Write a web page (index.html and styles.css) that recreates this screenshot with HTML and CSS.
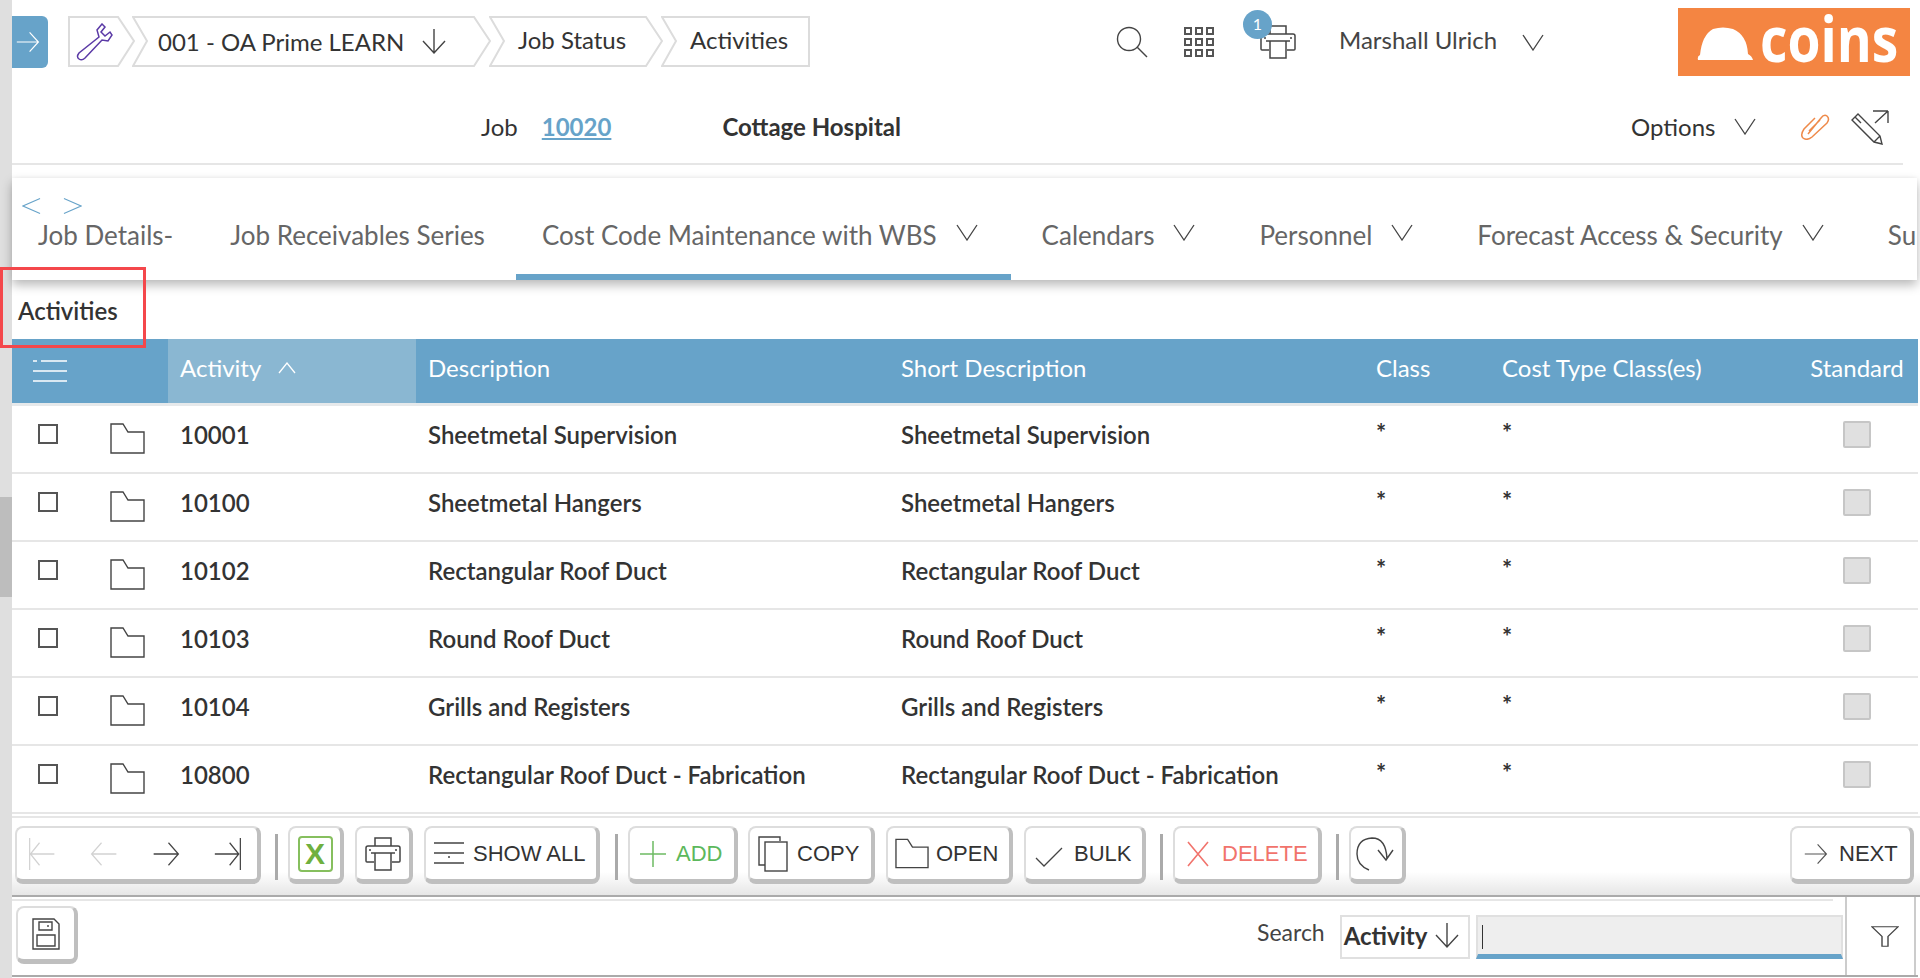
FILE: index.html
```html
<!DOCTYPE html>
<html lang="en">
<head>
  <meta charset="UTF-8">
  <title>Activities</title>
  <link rel="stylesheet" href="styles.css">
</head>
<body>
  <svg class="sprites" width="0" height="0">
    <symbol id="chev" viewBox="0 0 22 17"><path d="M1 1 L11 16 L21 1" fill="none" stroke="#444" stroke-width="1.3"/></symbol>
    <symbol id="folder" viewBox="0 0 35 31"><path d="M1 1 H13 L18 9 H34 V30 H1 Z" fill="#fff" stroke="#444" stroke-width="1.4"/></symbol>
    <symbol id="printer" viewBox="0 0 36 34"><path d="M10 9 V1 H26 V9 M9 25 H2 Q1 25 1 24 V11 Q1 9 3 9 H33 Q35 9 35 11 V24 Q35 25 34 25 H27 M6 16 H30 M10 16 V33 H26 V16 M4 13 H6 M30 13 H32" fill="none" stroke="#444" stroke-width="1.5"/></symbol>
    <symbol id="arrow" viewBox="0 0 30 26"><path d="M1 13 H28 M17 1 L28 13 L17 25" fill="none" stroke="currentColor" stroke-width="1.5"/></symbol>
  </svg>

  <div class="gutter"><div class="gutter-thumb"></div></div>

  <div class="page">
    <header class="topbar">
      <button class="nav-toggle"><svg class="ico-24 ico-white"><use href="#arrow"/></svg></button>
      <nav class="crumbs">
        <div class="crumb crumb-tool">
          <svg class="crumb-shape" viewBox="0 0 68 52"><path d="M1 1 H50 L66 25 L50 50 H1 Z"/></svg>
          <svg class="wrench" viewBox="0 0 38 38"><path d="M27 1 L22 7 L24 14 L4 30 Q1 34 4 36 Q7 38 10 35 L27 17 L33 18 L37 12 L35 9 L30 13 L26 9 L30 4 Z" fill="none" stroke="#5b3aa6" stroke-width="1.5"/></svg>
        </div>
        <div class="crumb crumb-co">
          <svg class="crumb-shape" viewBox="0 0 360 52"><path d="M1 1 H342 L358 25 L342 50 H1 L15 25 Z"/></svg>
          <span>001 - OA Prime LEARN</span>
          <svg class="down" viewBox="0 0 24 26"><path d="M12 1 V25 M1 13 L12 25 L23 13" fill="none" stroke="#444" stroke-width="1.4"/></svg>
        </div>
        <div class="crumb crumb-status">
          <svg class="crumb-shape" viewBox="0 0 175 52"><path d="M1 1 H157 L173 25 L157 50 H1 L15 25 Z"/></svg>
          <span>Job Status</span>
        </div>
        <div class="crumb crumb-act">
          <svg class="crumb-shape" viewBox="0 0 150 52"><path d="M1 1 H148 V50 H1 L15 25 Z"/></svg>
          <span>Activities</span>
        </div>
      </nav>

      <div class="top-tools">
        <svg class="search-ico" viewBox="0 0 32 32"><circle cx="13" cy="13" r="11.5" fill="none" stroke="#444" stroke-width="1.4"/><path d="M21 21 L31 31" stroke="#444" stroke-width="1.4"/></svg>
        <div class="apps">
          <i></i><i></i><i></i><i></i><i></i><i></i><i></i><i></i><i></i>
        </div>
        <div class="print-wrap">
          <svg class="print-ico"><use href="#printer"/></svg>
          <span class="badge">1</span>
        </div>
        <span class="user">Marshall Ulrich</span>
        <svg class="chev"><use href="#chev"/></svg>
      </div>

      <div class="logo">
        <svg class="helmet" viewBox="0 0 56 34"><path d="M1 33 Q0 29 3 28 Q5 8 16 2 Q26 -1 36 2 Q50 8 51 27 Q55 29 56 33 Z" fill="#fff"/></svg>
        <span>coins</span>
      </div>
    </header>

    <section class="job-row">
      <span class="job-label">Job</span>
      <a class="job-link">10020</a>
      <strong class="job-name">Cottage Hospital</strong>
      <span class="options">Options</span>
      <svg class="chev"><use href="#chev"/></svg>
      <svg class="clip" viewBox="0 0 30 27"><path d="M8 21 L21 5 Q24 1 27 3 Q30 6 27 10 L12 24 Q7 28 3 25 Q0 22 4 16 L15 5 M9 18 L20 7" fill="none" stroke="#ee8a4a" stroke-width="1.5"/></svg>
      <svg class="pencil" viewBox="0 0 38 38"><path d="M1 13 L7 7 L29 29 L31 37 L23 35 Z M4 10 L10 16 M7 7 L13 13 M23 35 L29 29 M22 4 H37 M37 4 V16 M37 4 L24 16" fill="none" stroke="#444" stroke-width="1.4"/></svg>
    </section>

    <section class="tab-panel">
      <div class="tab-arrows">
        <svg viewBox="0 0 20 18"><path d="M19 1 L1 9 L19 17" fill="none" stroke="#67a3c9" stroke-width="1.1"/></svg>
        <svg viewBox="0 0 20 18"><path d="M1 1 L19 9 L1 17" fill="none" stroke="#67a3c9" stroke-width="1.1"/></svg>
      </div>
      <div class="tabs">
        <div class="tab">Job Details-</div>
        <div class="tab">Job Receivables Series</div>
        <div class="tab tab-more tab-active">Cost Code Maintenance with WBS <svg class="chev"><use href="#chev"/></svg></div>
        <div class="tab tab-more">Calendars <svg class="chev"><use href="#chev"/></svg></div>
        <div class="tab tab-more">Personnel <svg class="chev"><use href="#chev"/></svg></div>
        <div class="tab tab-more">Forecast Access &amp; Security <svg class="chev"><use href="#chev"/></svg></div>
        <div class="tab">Su</div>
      </div>
    </section>

    <h2 class="section-title">Activities</h2>
    <div class="red-box"></div>

    <div class="grid-head">
      <div class="col-tools"><svg class="list-ico" viewBox="0 0 34 22"><path d="M0 1 H4 M8 1 H34 M0 11 H34 M0 21 H34" stroke="#fff" stroke-width="1.5"/></svg></div>
      <div class="head-sorted">Activity <svg class="up" viewBox="0 0 18 12"><path d="M1 11 L9 1 L17 11" fill="none" stroke="#fff" stroke-width="1.3"/></svg></div>
      <div class="head-cell">Description</div>
      <div class="head-cell">Short Description</div>
      <div class="head-cell head-tight">Class</div>
      <div class="head-cell head-tight">Cost Type Class(es)</div>
      <div class="head-std">Standard</div>
    </div>

    <div class="grid-body">
      <div class="grid-row">
        <div class="col-tools"><span class="check"></span><svg class="folder"><use href="#folder"/></svg></div>
        <div class="cell">10001</div><div class="cell">Sheetmetal Supervision</div><div class="cell">Sheetmetal Supervision</div>
        <div class="cell star">*</div><div class="cell star">*</div><div class="col-std"><span class="std-box"></span></div>
      </div>
      <div class="grid-row">
        <div class="col-tools"><span class="check"></span><svg class="folder"><use href="#folder"/></svg></div>
        <div class="cell">10100</div><div class="cell">Sheetmetal Hangers</div><div class="cell">Sheetmetal Hangers</div>
        <div class="cell star">*</div><div class="cell star">*</div><div class="col-std"><span class="std-box"></span></div>
      </div>
      <div class="grid-row">
        <div class="col-tools"><span class="check"></span><svg class="folder"><use href="#folder"/></svg></div>
        <div class="cell">10102</div><div class="cell">Rectangular Roof Duct</div><div class="cell">Rectangular Roof Duct</div>
        <div class="cell star">*</div><div class="cell star">*</div><div class="col-std"><span class="std-box"></span></div>
      </div>
      <div class="grid-row">
        <div class="col-tools"><span class="check"></span><svg class="folder"><use href="#folder"/></svg></div>
        <div class="cell">10103</div><div class="cell">Round Roof Duct</div><div class="cell">Round Roof Duct</div>
        <div class="cell star">*</div><div class="cell star">*</div><div class="col-std"><span class="std-box"></span></div>
      </div>
      <div class="grid-row">
        <div class="col-tools"><span class="check"></span><svg class="folder"><use href="#folder"/></svg></div>
        <div class="cell">10104</div><div class="cell">Grills and Registers</div><div class="cell">Grills and Registers</div>
        <div class="cell star">*</div><div class="cell star">*</div><div class="col-std"><span class="std-box"></span></div>
      </div>
      <div class="grid-row">
        <div class="col-tools"><span class="check"></span><svg class="folder"><use href="#folder"/></svg></div>
        <div class="cell">10800</div><div class="cell">Rectangular Roof Duct - Fabrication</div><div class="cell">Rectangular Roof Duct - Fabrication</div>
        <div class="cell star">*</div><div class="cell star">*</div><div class="col-std"><span class="std-box"></span></div>
      </div>
    </div>

    <div class="toolbar">
      <div class="btn pager">
        <svg class="ico-pager off" viewBox="0 0 34 36" preserveAspectRatio="none"><path d="M2 1 V35 M3 18 H32 M14 6 L3 18 L14 30" fill="none" stroke="currentColor" stroke-width="1.5"/></svg>
        <svg class="ico-pager off" viewBox="0 0 34 36" preserveAspectRatio="none"><path d="M2 18 H32 M14 6 L2 18 L14 30" fill="none" stroke="currentColor" stroke-width="1.5"/></svg>
        <svg class="ico-pager" viewBox="0 0 34 36" preserveAspectRatio="none"><path d="M2 18 H32 M20 6 L32 18 L20 30" fill="none" stroke="currentColor" stroke-width="1.5"/></svg>
        <svg class="ico-pager" viewBox="0 0 34 36" preserveAspectRatio="none"><path d="M1 18 H30 M19 6 L30 18 L19 30 M32 1 V35" fill="none" stroke="currentColor" stroke-width="1.5"/></svg>
      </div>
      <span class="sep"></span>
      <div class="btn btn-excel"><span class="excel-x">X</span></div>
      <div class="btn btn-print"><svg class="print-ico"><use href="#printer"/></svg></div>
      <div class="btn btn-show">
        <svg class="ico-showall" viewBox="0 0 30 24"><path d="M0 1 H30 M0 11 H30 M15 14 V16 M0 21 H30" fill="none" stroke="#444" stroke-width="1.5"/></svg>
        SHOW ALL
      </div>
      <span class="sep sep-a"></span>
      <div class="btn btn-add">
        <svg class="ico-add" viewBox="0 0 26 26"><path d="M13 0 V26 M0 13 H26" stroke="#6dbb63" stroke-width="1.5"/></svg>
        ADD
      </div>
      <div class="btn btn-copy">
        <svg class="ico-copy" viewBox="0 0 30 36"><path d="M22 5 V1 H1 V29 H7" fill="none" stroke="#444" stroke-width="1.4"/><rect x="7" y="6" width="22" height="29" fill="#fff" stroke="#444" stroke-width="1.4"/></svg>
        COPY
      </div>
      <div class="btn btn-open">
        <svg class="ico-open"><use href="#folder"/></svg>
        OPEN
      </div>
      <div class="btn btn-bulk">
        <svg class="ico-bulk" viewBox="0 0 28 20"><path d="M1 11 L9 19 L27 1" fill="none" stroke="#444" stroke-width="1.3"/></svg>
        BULK
      </div>
      <span class="sep sep-b"></span>
      <div class="btn btn-delete">
        <svg class="ico-del" viewBox="0 0 22 26"><path d="M1 1 L21 25 M21 1 L1 25" stroke="#f1736c" stroke-width="1.6"/></svg>
        DELETE
      </div>
      <span class="sep sep-c"></span>
      <div class="btn btn-refresh">
        <svg class="ico-refresh" viewBox="0 0 38 34"><path d="M13 33 Q1 28 1 17 Q1 2 16 1 Q30 1 31 22 M22 13 L30 23 L37 13" fill="none" stroke="#444" stroke-width="1.4"/></svg>
      </div>
      <div class="btn btn-next">
        <svg class="ico-24 ico-grey"><use href="#arrow"/></svg>
        NEXT
      </div>
    </div>

    <div class="footer-bar">
      <div class="btn btn-save">
        <svg class="ico-save" viewBox="0 0 28 32"><path d="M1 1 H22 L27 6 V31 H1 Z M7 4 H20 V12 H7 Z M16 7 V9 M5 17 H23 V28 H5 Z" fill="none" stroke="#444" stroke-width="1.4"/></svg>
      </div>
      <span class="search-label">Search</span>
      <div class="search-select">Activity <svg class="down-sm" viewBox="0 0 24 26"><path d="M12 1 V25 M1 13 L12 25 L23 13" fill="none" stroke="#444" stroke-width="1.4"/></svg></div>
      <div class="search-input"><span class="caret"></span></div>
      <div class="filter-box"><svg class="funnel" viewBox="0 0 28 28" preserveAspectRatio="none"><path d="M1 1 H27 L17 14 V27 H11 V14 Z" fill="none" stroke="#444" stroke-width="1.4"/></svg></div>
    </div>
  </div>
</body>
</html>
```

FILE: styles.css
```css
* {
  box-sizing: border-box;
}
body {
  margin: 0;
  height: 978px;
  overflow: hidden;
  background: #fff;
  display: flex;
  font-family: Lato, "Liberation Sans", sans-serif;
  color: #333;
}
svg {
  display: block;
  flex: none;
}
.sprites {
  position: absolute;
}

.gutter {
  width: 12px;
  height: 978px;
  background: #dfdfdf;
  padding-top: 497px;
  flex: none;
}
.gutter-thumb {
  height: 100px;
  background: #bdbdbd;
}
.page {
  width: 1908px;
  position: relative;
}

/* top bar */
.topbar {
  height: 82px;
  display: flex;
  align-items: flex-start;
  padding-top: 16px;
}
.nav-toggle {
  width: 36px;
  height: 52px;
  border: 0;
  padding: 0 0 0 4px;
  background: #67a3c9;
  border-radius: 0 6px 6px 0;
}
.ico-24 {
  width: 24px;
  height: 26px;
}
.ico-white {
  color: #fff;
}
.ico-grey {
  color: #555;
}
.crumbs {
  display: flex;
  margin-left: 20px;
  height: 52px;
  font-size: 24px;
}
.crumb {
  position: relative;
  height: 52px;
  display: flex;
  align-items: center;
  flex: none;
}
.crumb-shape {
  position: absolute;
  left: 0;
  top: 0;
  width: 100%;
  height: 100%;
}
.crumb-shape path {
  fill: #fff;
  stroke: #dcdcdc;
  stroke-width: 2;
}
.crumb span,
.crumb svg.down,
.crumb svg.wrench {
  position: relative;
}
.crumb-tool {
  width: 68px;
  padding-left: 7px;
}
.wrench {
  width: 38px;
  height: 38px;
}
.crumb-co {
  width: 360px;
  margin-left: -4px;
  padding: 0 0 2px 26px;
}
.down {
  width: 24px;
  height: 26px;
  margin-left: 18px;
}
.crumb-status {
  width: 175px;
  margin-left: -3px;
  padding: 0 0 5px 29px;
}
.crumb-act {
  width: 150px;
  margin-left: -3px;
  padding: 0 0 5px 29px;
}

.top-tools {
  display: flex;
  align-items: center;
  margin-left: 305px;
  height: 52px;
}
.search-ico {
  width: 32px;
  height: 32px;
}
.apps {
  display: grid;
  grid-template-columns: repeat(3, 8px);
  grid-template-rows: repeat(3, 8px);
  gap: 3px;
  margin-left: 36px;
}
.apps i {
  border: 2px solid #555;
}
.print-wrap {
  position: relative;
  margin-left: 46px;
}
.print-ico {
  width: 36px;
  height: 34px;
}
.badge {
  position: absolute;
  left: -17px;
  top: -15px;
  width: 29px;
  height: 29px;
  border-radius: 50%;
  background: #67a3c9;
  color: #fff;
  font-size: 16px;
  line-height: 27px;
  text-align: center;
}
.user {
  font-size: 24px;
  color: #444;
  margin-left: 43px;
  padding-bottom: 5px;
}
.chev {
  width: 22px;
  height: 17px;
}
.top-tools .chev {
  margin-left: 25px;
}
.logo {
  position: absolute;
  left: 1666px;
  top: 8px;
  width: 232px;
  height: 68px;
  background: #f48542;
  color: #fff;
  display: flex;
  align-items: center;
  padding-left: 19px;
  font-family: "Open Sans", sans-serif;
  font-size: 62px;
  font-weight: 700;
}
.helmet {
  width: 56px;
  height: 34px;
  margin: 3px 7px 0 0;
}
.logo span {
  line-height: 68px;
  margin-top: -9px;
  transform: scaleX(0.86);
  transform-origin: left center;
}

/* job row */
.job-row {
  height: 83px;
  margin-right: 17px;
  border-bottom: 2px solid #e6e6e6;
  display: flex;
  align-items: center;
  font-size: 24px;
  padding: 8px 0 0 469px;
}
.job-link {
  margin-left: 24px;
  color: #67a3c9;
  font-weight: 700;
  text-decoration: underline;
}
.job-name {
  margin-left: 111px;
  font-weight: 700;
}
.options {
  margin-left: 730px;
}
.job-row .chev {
  margin-left: 19px;
}
.clip {
  width: 30px;
  height: 27px;
  margin-left: 44px;
}
.pencil {
  width: 38px;
  height: 38px;
  margin: -2px 0 0 21px;
}

/* tabs */
.tab-panel {
  height: 102px;
  margin-top: 13px;
  width: 1905px;
  background: #fff;
  box-shadow: 0 5px 10px rgba(0, 0, 0, 0.28), 0 -1px 3px rgba(0, 0, 0, 0.03);
  padding-top: 19px;
  overflow: hidden;
}
.tab-arrows {
  display: flex;
  gap: 22px;
  height: 18px;
  padding-left: 10px;
}
.tab-arrows svg {
  width: 19px;
  height: 18px;
}
.tabs {
  display: flex;
  gap: 5px;
  height: 65px;
  font-size: 26px;
  color: #666;
}
.tab {
  padding: 0 26px;
  line-height: 40px;
  white-space: nowrap;
  display: flex;
  gap: 19px;
  height: 65px;
  flex: none;
}
.tab .chev {
  margin-top: 9px;
}
.tab-more {
  padding-right: 33px;
}
.tab-active {
  border-bottom: 6px solid #67a3c9;
}

/* heading + annotation */
.section-title {
  height: 59px;
  margin: 0;
  padding: 14px 0 0 6px;
  font-size: 24px;
  line-height: 34px;
  font-weight: 600;
  color: #333;
}
.red-box {
  position: absolute;
  left: -12px;
  top: 267px;
  width: 146px;
  height: 81px;
  border: 3px solid #f4474b;
  z-index: 2;
}

/* grid */
.grid-head,
.grid-row {
  display: grid;
  grid-template-columns: 156px 248px 473px 475px 126px 310px 118px;
  width: 1906px;
}
.grid-head {
  height: 67px;
  background: #67a3c9;
  border-bottom: 3px solid #e6e9eb;
  color: #fff;
  font-size: 24px;
  line-height: 58px;
}
.grid-head > div {
  height: 64px;
}
.col-tools {
  display: flex;
  align-items: flex-start;
}
.list-ico {
  width: 34px;
  height: 22px;
  margin: 21px 0 0 21px;
}
.head-sorted {
  background: #8ab7d2;
  padding-left: 12px;
  display: flex;
  gap: 17px;
}
.up {
  width: 18px;
  height: 12px;
  margin-top: 23px;
}
.head-cell {
  padding-left: 12px;
}
.head-tight {
  padding-left: 12px;
}
.head-std {
  text-align: center;
  padding-right: 4px;
}
.grid-row {
  height: 68px;
  border-bottom: 2px solid #e6e6e6;
  font-size: 24px;
  font-weight: 600;
  color: #333;
}
.grid-row .col-tools {
  padding: 18px 0 0 26px;
}
.check {
  width: 20px;
  height: 20px;
  border: 2px solid #555;
  margin-top: 0;
}
.folder {
  width: 35px;
  height: 31px;
  margin: -1px 0 0 52px;
}
.cell {
  padding: 9px 0 0 12px;
  line-height: 40px;
}
.star {
  font-weight: 700;
  padding-top: 9px;
  line-height: 36px;
  font-size: 24px;
}
.col-std {
  display: flex;
  justify-content: center;
  padding: 15px 4px 0 0;
}
.std-box {
  width: 28px;
  height: 27px;
  background: #e0e0e0;
  border: 2px solid #c6c6c6;
  border-radius: 2px;
}

/* toolbar */
.toolbar {
  height: 81px;
  margin-top: 2px;
  border-top: 2px solid #e6e6e6;
  border-bottom: 2px solid #aaa;
  background: linear-gradient(#fff 70%, #e6e6e6);
  display: flex;
  align-items: flex-start;
  padding: 8px 0 0 3px;
  font-family: "Liberation Sans", Arial, sans-serif;
  font-size: 22px;
  color: #333;
}
.btn {
  height: 58px;
  background: #fff;
  border: 2px solid #ddd;
  border-right: 4px solid #bfbfbf;
  border-bottom: 5px solid #bfbfbf;
  border-radius: 8px;
  display: flex;
  align-items: center;
  flex: none;
}
.pager {
  width: 246px;
  padding-left: 11px;
  gap: 34px;
}
.ico-pager {
  width: 28px;
  height: 34px;
  color: #444;
}
.ico-pager.off {
  color: #d2d2d2;
}
.sep {
  width: 3px;
  height: 46px;
  margin: 8px 10px 0 14px;
  background: #aaa;
}
.btn-excel {
  width: 56px;
  justify-content: center;
}
.excel-x {
  width: 35px;
  height: 36px;
  border: 2px solid #86bf5e;
  border-radius: 4px;
  color: #6fb03f;
  font-size: 30px;
  font-weight: 700;
  line-height: 32px;
  text-align: center;
}
.btn-print {
  width: 58px;
  margin-left: 11px;
  justify-content: center;
}
.btn-show {
  width: 176px;
  margin-left: 11px;
  padding-left: 8px;
  gap: 9px;
}
.ico-showall {
  width: 30px;
  height: 24px;
}
.sep-a {
  margin: 8px 10px 0 15px;
}
.btn-add {
  width: 110px;
  color: #5cb85c;
  padding-left: 10px;
  gap: 10px;
}
.ico-add {
  width: 26px;
  height: 26px;
}
.btn-copy {
  width: 127px;
  margin-left: 10px;
  padding-left: 8px;
  gap: 9px;
}
.ico-copy {
  width: 30px;
  height: 36px;
}
.btn-open {
  width: 127px;
  margin-left: 11px;
  padding-left: 7px;
  gap: 7px;
}
.ico-open {
  width: 34px;
  height: 31px;
}
.btn-bulk {
  width: 122px;
  margin-left: 11px;
  padding-left: 9px;
  gap: 11px;
}
.ico-bulk {
  width: 28px;
  height: 20px;
  margin-top: 6px;
}
.sep-b {
  margin: 8px 10px 0 14px;
}
.btn-delete {
  width: 149px;
  color: #f1736c;
  padding-left: 12px;
  gap: 13px;
}
.ico-del {
  width: 22px;
  height: 26px;
}
.sep-c {
  margin: 8px 10px 0 14px;
}
.btn-refresh {
  width: 57px;
  padding-left: 5px;
}
.ico-refresh {
  width: 38px;
  height: 34px;
}
.btn-next {
  width: 124px;
  margin-left: 384px;
  padding-left: 12px;
  gap: 11px;
}

/* footer search bar */
.footer-bar {
  height: 80px;
  border-bottom: 2px solid #aaa;
  display: flex;
  align-items: flex-start;
  width: 1906px;
  position: relative;
}
.footer-bar::before {
  content: "";
  position: absolute;
  left: 0;
  top: 2px;
  width: 1821px;
  height: 2px;
  background: #e6e6e6;
}
.btn-save {
  width: 62px;
  height: 58px;
  margin: 9px 0 0 4px;
  justify-content: center;
}
.ico-save {
  width: 28px;
  height: 32px;
}
.search-label {
  font-size: 23px;
  color: #444;
  margin: 18px 0 0 1179px;
  line-height: 34px;
}
.search-select {
  width: 130px;
  height: 44px;
  margin: 18px 0 0 15px;
  border: 2px solid #e0e0e0;
  font-size: 24px;
  font-weight: 700;
  display: flex;
  align-items: center;
  padding: 0 0 4px 2px;
  gap: 8px;
  white-space: nowrap;
}
.down-sm {
  width: 24px;
  height: 28px;
}
.search-input {
  width: 367px;
  height: 44px;
  margin: 18px 0 0 6px;
  background: #eee;
  border: 2px solid #e0e0e0;
  border-bottom: 5px solid #67a3c9;
  padding: 8px 0 0 4px;
}
.caret {
  display: block;
  width: 1px;
  height: 24px;
  background: #333;
}
.filter-box {
  width: 71px;
  height: 78px;
  margin-left: 2px;
  border-left: 2px solid #ccc;
  border-right: 2px solid #ccc;
  padding: 29px 0 0 24px;
}
.funnel {
  width: 28px;
  height: 21px;
}
```
